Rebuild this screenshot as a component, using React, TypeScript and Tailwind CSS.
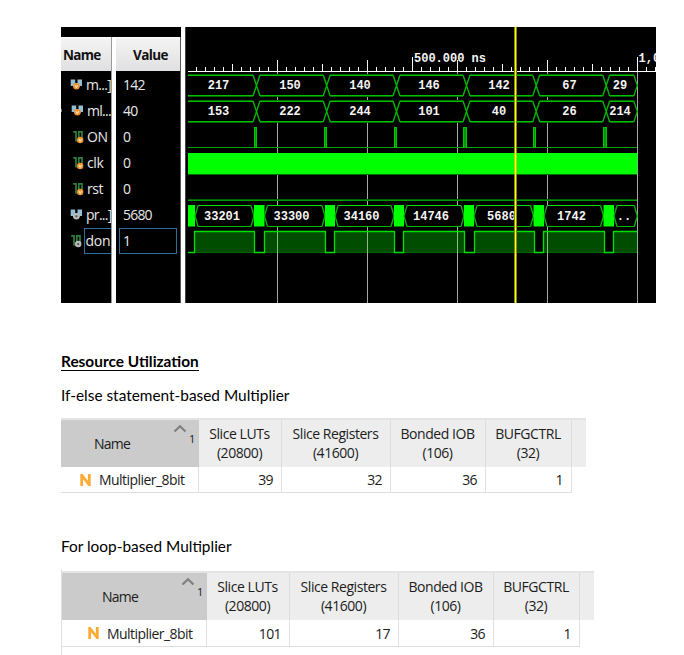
import React from "react";

type Kind = "bus" | "bit";

const signals: { name: string; value: string; kind: Kind; tone: "orange" | "gray" }[] = [
  { name: "m...]", value: "142", kind: "bus", tone: "orange" },
  { name: "ml...", value: "40", kind: "bus", tone: "orange" },
  { name: "ON", value: "0", kind: "bit", tone: "orange" },
  { name: "clk", value: "0", kind: "bit", tone: "orange" },
  { name: "rst", value: "0", kind: "bit", tone: "orange" },
  { name: "pr...]", value: "5680", kind: "bus", tone: "gray" },
  { name: "don", value: "1", kind: "bit", tone: "gray" },
];

function SignalIcon({ kind, tone }: { kind: Kind; tone: "orange" | "gray" }) {
  const dot = tone === "orange" ? "#f0922b" : "#b8b8b8";
  return (
    <svg width="13" height="14" viewBox="0 0 13 14" className="shrink-0">
      {kind === "bus" ? (
        <>
          <path d="M0.7 1.5H5.2V5H7.5V1.5H12V8H10L8.5 9.5H4.2L2.7 8H0.7Z" fill="#93bdd2" />
          <circle cx="6.4" cy="8.3" r="3.3" fill={dot} />
          {tone === "orange" ? (
            <path d="M5.1 7.2L6.4 9.8L7.7 7.2" stroke="#fff0d8" strokeWidth="1" fill="none" />
          ) : (
            <circle cx="6.4" cy="8.3" r="1.1" fill="#555" />
          )}
        </>
      ) : (
        <>
          <path d="M1.2 1.9H4V10.6H6.8V1.9H10V8" stroke="#2f7f3c" strokeWidth="1.7" fill="none" />
          <circle cx="8.2" cy="10" r="3.2" fill={dot} />
          {tone === "orange" ? (
            <path d="M6.9 8.9L8.2 11.5L9.5 8.9" stroke="#fff0d8" strokeWidth="1" fill="none" />
          ) : (
            <circle cx="8.2" cy="10" r="1.1" fill="#4a4a4a" />
          )}
        </>
      )}
    </svg>
  );
}

const crossings = [256.5, 326.7, 396.5, 466.5, 536.2, 606.2];
const grid = [277, 367, 457, 547, 637];
const pulses = [
  [254, 257],
  [324, 327],
  [394, 397],
  [463, 467],
  [533, 536],
  [603, 607],
];
const busy = [
  [188, 195],
  [254, 264.5],
  [325, 335],
  [394, 404],
  [464, 474],
  [533.5, 544],
  [603.5, 614],
];
const lows = [
  [254.5, 264.5],
  [325.5, 334.5],
  [394.5, 403.5],
  [464.5, 474.5],
  [534.5, 543.5],
  [604.5, 613.5],
];

function BusRow({ top }: { top: number }) {
  const bounds = [183, ...crossings, 637.3];
  return (
    <g>
      <rect x="188" y={top} width="449" height="22" fill="#000" />
      {bounds.slice(0, -1).map((a, i) => {
        const b = bounds[i + 1];
        const last = i === bounds.length - 2;
        const l = i === 0 ? 188 : a + 3.5;
        const r = b - 3.5;
        return (
          <g key={i}>
            <path d={`M${l} ${top + 0.5}H${r}M${l} ${top + 22.5 - 0}H${r}`} stroke="#006c00" />
            <path d={`M${l} ${top + 1.5}H${r}M${l} ${top + 21.5}H${r}`} stroke="#00c000" />
            {last ? (
              <path d={`M${r} ${top + 1}L${b} ${top + 11.5}L${r} ${top + 22}`} stroke="#00b400" strokeWidth="1.3" fill="none" />
            ) : (
              <path
                d={`M${r} ${top + 1}L${b + 3.5} ${top + 22}M${r} ${top + 22}L${b + 3.5} ${top + 1}`}
                stroke="#00b400"
                strokeWidth="1.4"
              />
            )}
          </g>
        );
      })}
    </g>
  );
}

const labels: [string, number, number][] = [
  ["217", 218.5, 89], ["150", 290, 89], ["140", 360, 89], ["146", 429, 89], ["142", 499, 89], ["67", 569.5, 89], ["29", 620, 89],
  ["153", 218.5, 115], ["222", 290, 115], ["244", 360, 115], ["101", 429, 115], ["40", 499, 115], ["26", 569.5, 115], ["214", 620, 115],
  ["33201", 222, 219.5], ["33300", 291.5, 219.5], ["34160", 361.5, 219.5], ["14746", 431, 219.5], ["5680", 501.5, 219.5], ["1742", 571.5, 219.5], ["..", 624, 219.5],
];

function Waveform() {
  const ticks = Array.from({ length: 52 }, (_, i) => i + 1);
  const donePath =
    "M188 252.5H194.5V231.5" + lows.map(([f, r]) => `H${f}V252.5H${r}V231.5`).join("") + "H637";
  const spans = [194.5, ...lows.map((l) => l[1])].map((s, i) => [s, i < 6 ? lows[i][0] : 637]);
  return (
    <svg width="470" height="276" viewBox="186 27 470 276" className="block bg-black">
      <rect x="188" y="71" width="468" height="1" fill="#fff" />
      {ticks.map((k) => (
        <rect key={k} x={187 + 9 * k} y={k % 5 === 0 ? 64 : 67} width="1" height={k % 5 === 0 ? 7 : 4} fill="#fff" />
      ))}
      {grid.map((x) => (
        <g key={x}>
          <rect x={x} y="60" width="1" height="243" fill="#a8a8a8" />
          <rect x={x} y="60" width="1" height="12" fill="#f0f0f0" />
        </g>
      ))}
      <rect x="412" y="57" width="1" height="14" fill="#fff" />
      <rect x="637" y="57" width="1" height="14" fill="#fff" />

      <BusRow top={74} />
      <BusRow top={100} />

      <rect x="188" y="147" width="449" height="1" fill="#00a400" />
      {pulses.map(([a, b]) => (
        <g key={a}>
          <rect x={a} y="127" width={b - a} height="21" fill="#009a00" />
          <path d={`M${a + 0.5} 148V127.5H${b - 0.5}V148`} stroke="#00c800" fill="none" />
        </g>
      ))}

      <rect x="188" y="153" width="449.5" height="21" fill="#00ff00" />
      <rect x="188" y="174" width="449" height="1" fill="#006a00" />

      <rect x="188" y="199" width="449" height="1" fill="#006000" />
      <rect x="188" y="200" width="449" height="1" fill="#009800" />

      <rect x="188" y="205" width="449" height="22" fill="#000" />
      {busy.map(([a, b], i) => {
        const end = i < 6 ? busy[i + 1][0] : 637.3;
        return (
          <g key={a}>
            <rect x={a} y="205" width={b - a} height="21.5" fill="#00ff00" />
            <path d={`M${b + 3} 205.5H${end - 3}`} stroke="#00e000" />
            <path d={`M${b + 3} 226.5H${end - 3}`} stroke="#00b800" />
            <path
              d={`M${b + 3} 205.5L${b} 216L${b + 3} 226.5M${end - 3} 205.5L${end} 216L${end - 3} 226.5`}
              stroke="#00b800"
              strokeWidth="1.3"
              fill="none"
            />
          </g>
        );
      })}

      {spans.map(([a, b]) => (
        <g key={a}>
          <rect x={a} y="231" width={b - a} height="21" fill="#004d00" />
          <rect x={a} y="252" width={b - a} height="1" fill="#006400" />
        </g>
      ))}
      {grid.map((x) => (
        <rect key={x} x={x} y="227" width="1" height="26" fill="#8fb88f" />
      ))}
      <path d={donePath} stroke="#00e000" strokeWidth="1.3" fill="none" />

      <g fill="#f4f4f4" className="font-['Liberation_Mono',monospace] text-[12px] font-bold">
        {labels.map(([t, x, y]) => (
          <text key={`${x}-${y}`} x={x} y={y} textAnchor="middle">
            {t}
          </text>
        ))}
        <text x="414" y="62">500.000 ns</text>
        <text x="638.5" y="62">1,0</text>
      </g>

      <rect x="514" y="27" width="3" height="276" fill="#8a8a00" />
      <rect x="515" y="27" width="1" height="276" fill="#ffff20" />
      <rect x="514" y="153" width="3" height="21" fill="#b4d800" />
      <rect x="515" y="153" width="1" height="21" fill="#ffff20" />
    </svg>
  );
}

function Simulator() {
  return (
    <div className="flex h-[276px] w-[595px] overflow-hidden bg-black font-['Open_Sans','Noto_Sans',sans-serif] text-[14px] text-[#e8e8e8]">
      <div className="flex w-[120px] flex-col">
        <div className="h-[10px] shrink-0" />
        <div className="flex flex-1">
          <div className="w-[51px] overflow-hidden border-r border-[#9a9a9a]">
            <div className="flex h-[34px] items-center border-t border-white bg-gradient-to-b from-[#f4f4f4] to-[#e0e0e2] pt-px pl-[2px] text-[13.5px] font-bold tracking-[-0.75px] text-[#111]">
              Name
            </div>
            {signals.map((s) => (
              <div key={s.name} className="flex h-[26px] items-center whitespace-nowrap pt-[1px]">
                <span className={s.kind === "bus" ? "h-[3px] w-[1.5px] bg-[#777]" : "h-[3px] w-[1.5px]"} />
                <span className="w-[9px] shrink-0" />
                <SignalIcon kind={s.kind} tone={s.tone} />
                <span
                  className={
                    s.name === "don"
                      ? "ml-[0.5px] flex h-[26px] w-[40px] shrink-0 items-center border border-[#2f6f9f] pl-[1px] tracking-[-0.3px]"
                      : s.kind === "bus"
                        ? "ml-[3px] tracking-[-0.7px]"
                        : "ml-[2.5px] tracking-[-0.4px]"
                  }
                >
                  {s.name}
                </span>
              </div>
            ))}
          </div>
          <div className="w-[4px] bg-white" />
          <div className="w-[65px] border-r border-[#555]">
            <div className="flex h-[34px] items-center border-t border-white bg-gradient-to-b from-[#f4f4f4] to-[#e0e0e2] pt-px pl-[17px] text-[13.5px] font-bold tracking-[-0.6px] text-[#111]">
              Value
            </div>
            {signals.map((s) => (
              <div key={s.name} className="flex h-[26px] items-center pt-[1px]">
                <span
                  className={
                    s.name === "don"
                      ? "ml-[3px] flex h-[26px] w-[58px] items-center border border-[#2f6f9f] pl-[3px]"
                      : "pl-[7px] tracking-[-0.8px]"
                  }
                >
                  {s.value}
                </span>
              </div>
            ))}
          </div>
        </div>
      </div>
      <div className="w-[4px] bg-white" />
      <div className="w-px bg-[#444]" />
      <Waveform />
    </div>
  );
}

function NetIcon() {
  return (
    <svg width="11" height="12" viewBox="0 0 11 12" className="shrink-0">
      <path d="M1.7 12V1.2L9.3 10.8V0" stroke="#fbab33" strokeWidth="2.8" fill="none" />
    </svg>
  );
}

function Utilization({ wide, values }: { wide?: boolean; values: string[] }) {
  const columns: [string, string, string][] = [
    ["Slice LUTs", "(20800)", "w-[83px]"],
    ["Slice Registers", "(41600)", "w-[109px]"],
    ["Bonded IOB", "(106)", "w-[95px]"],
    ["BUFGCTRL", "(32)", "w-[86px]"],
  ];
  return (
    <div className="w-fit font-['Open_Sans','Noto_Sans',sans-serif] text-[14px] text-[#1c1c1c]">
      <div className="flex h-[49px] border-t-2 border-[#e4e4e4] bg-[#ededed]">
        <div className={wide ? "flex w-[145px] bg-[#cbcbcb] pl-[40px]" : "flex w-[138px] bg-[#cbcbcb] pl-[33px]"}>
          <span className="w-[79px] pt-[14px] leading-[20px] tracking-[-0.8px]">Name</span>
          <svg width="14" height="9" viewBox="0 0 14 9" className="mt-[4px]">
            <path d="M1.5 7.5L7 2.2L12.5 7.5" stroke="#808080" strokeWidth="2.2" fill="none" />
          </svg>
          <span className="ml-[2px] pt-[11px] text-[11px] leading-[16px]">1</span>
        </div>
        {columns.map(([a, b, w]) => (
          <div key={a} className={`${w} border-r border-[#dcdcdc] pt-[4px] pr-[1px] text-center leading-[19px] tracking-[-0.45px] whitespace-nowrap`}>
            <div>{a}</div>
            <div>{b}</div>
          </div>
        ))}
        <div className={wide ? "w-[14px]" : "w-[14px]"} />
      </div>
      <div className={wide ? "mr-[14px] flex h-[27px] border-b border-[#dedede] bg-white" : "mr-[14px] flex h-[26px] border-b border-[#dedede] bg-white"}>
        <div
          className={
            wide
              ? "flex w-[145px] items-center border-r border-[#e2e2e2] pl-[26px]"
              : "flex w-[138px] items-center border-r border-[#e2e2e2] pl-[19px]"
          }
        >
          <NetIcon />
          <span className="ml-[8px] tracking-[-0.55px]">Multiplier_8bit</span>
        </div>
        {columns.map(([a, , w], i) => (
          <div key={a} className={`${w} flex items-center justify-end border-r border-[#e2e2e2] pr-[8px] tracking-[-0.6px]`}>
            {values[i]}
          </div>
        ))}
      </div>
    </div>
  );
}

export default function App() {
  return (
    <div className="h-[655px] w-[684px] overflow-hidden bg-white pt-[27px] pl-[61px] text-black">
      <Simulator />
      <div className="font-['Lato',sans-serif] text-[15.4px]">
        <h2 className="mt-[48px] h-[20px] leading-[20px] font-bold">
          <span className="border-b border-black">Resource Utilization</span>
        </h2>
        <p className="mt-[14px] h-[20px] leading-[20px]">If-else statement-based Multiplier</p>
      </div>
      <div className="mt-[13px]">
        <Utilization values={["39", "32", "36", "1"]} />
      </div>
      <p className="mt-[43px] h-[20px] font-['Lato',sans-serif] text-[15.4px] leading-[20px]">For loop-based Multiplier</p>
      <div className="mt-[13px] h-[86px] border-l border-[#e2e2e2] pt-[2px]">
        <Utilization wide values={["101", "17", "36", "1"]} />
      </div>
    </div>
  );
}
